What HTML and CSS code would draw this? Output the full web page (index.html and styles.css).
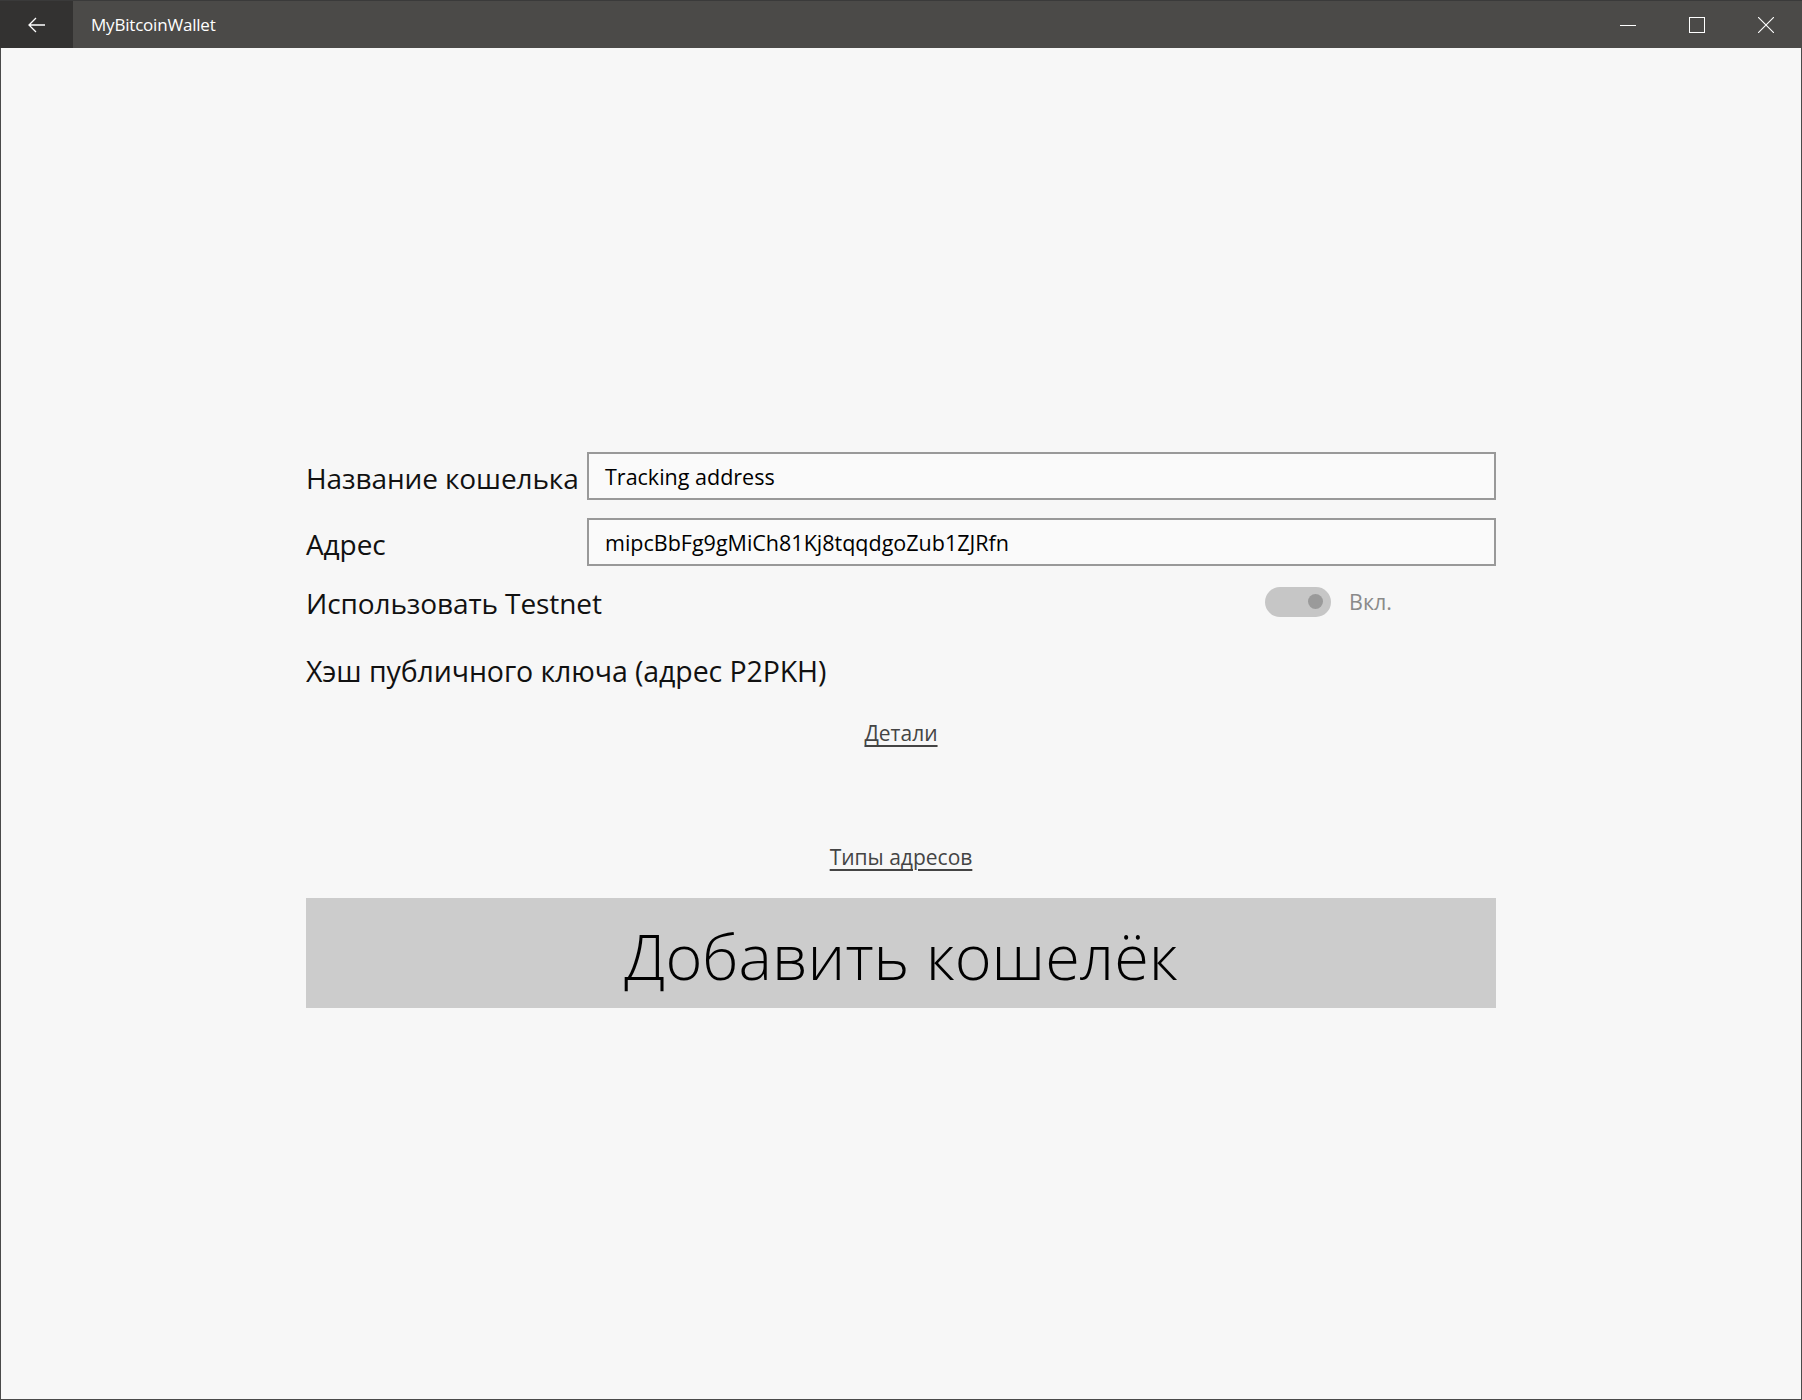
FILE: index.html
```html
<!DOCTYPE html>
<html lang="ru">
<head>
<meta charset="utf-8">
<title>MyBitcoinWallet</title>
<link rel="stylesheet" href="styles.css">
</head>
<body>
<div class="window">
  <header class="titlebar">
    <div class="back">
      <svg width="20" height="20" viewBox="0 0 20 20"><path d="M18 10H2M9 3L2 10L9 17" fill="none" stroke="#fff" stroke-width="1.3"/></svg>
    </div>
    <div class="title">MyBitcoinWallet</div>
    <div class="controls">
      <div class="ctl"><svg width="16" height="16" viewBox="0 0 16 16"><path d="M0 8.5H16" stroke="#fff" stroke-width="1"/></svg></div>
      <div class="ctl"><svg width="16" height="16" viewBox="0 0 16 16"><rect x="0.5" y="0.5" width="15" height="15" fill="none" stroke="#fff" stroke-width="1"/></svg></div>
      <div class="ctl"><svg width="16" height="16" viewBox="0 0 16 16"><path d="M0 0L16 16M16 0L0 16" stroke="#fff" stroke-width="1.1"/></svg></div>
    </div>
  </header>
  <main class="content">
    <div class="form">
      <div class="row field-row">
        <div class="label">Название кошелька</div>
        <div class="input">Tracking address</div>
      </div>
      <div class="row field-row second">
        <div class="label">Адрес</div>
        <div class="input">mipcBbFg9gMiCh81Kj8tqqdgoZub1ZJRfn</div>
      </div>
      <div class="row toggle-row">
        <div class="label">Использовать Testnet</div>
        <div class="toggle-wrap">
          <div class="toggle"><span class="knob"></span></div>
          <span class="toggle-text">Вкл.</span>
        </div>
      </div>
      <div class="hash">Хэш публичного ключа (адрес P2PKH)</div>
      <div class="link details"><a>Детали</a></div>
      <div class="link types"><a>Типы адресов</a></div>
      <div class="add-btn">Добавить кошелёк</div>
    </div>
  </main>
</div>
</body>
</html>
```

FILE: styles.css
```css
html, body {
  margin: 0;
  padding: 0;
  height: 100%;
}
body {
  font-family: "Open Sans", "Noto Sans", sans-serif;
  background: #f7f7f7;
}
.window {
  box-sizing: border-box;
  width: 1802px;
  height: 1400px;
  border: 1px solid #4a4a4a;
  border-top: none;
  display: flex;
  flex-direction: column;
  background: #f7f7f7;
}
.titlebar {
  height: 48px;
  background: #4b4a48;
  border-top: 1px solid #3a3a3a;
  box-sizing: border-box;
  display: flex;
  align-items: stretch;
  color: #fff;
  margin: 0 -1px;
  padding-right: 2px;
}
.back {
  width: 73px;
  background: #333231;
  display: flex;
  align-items: center;
  justify-content: center;
}
.title {
  display: flex;
  align-items: center;
  padding-left: 18px;
  font-size: 17px;
  flex: 1;
  letter-spacing: -0.2px;
}
.controls {
  display: flex;
}
.ctl {
  width: 69px;
  display: flex;
  align-items: center;
  justify-content: center;
}
.content {
  flex: 1;
  padding-top: 404px;
}
.form {
  width: 1190px;
  margin: 0 auto;
  display: flex;
  flex-direction: column;
}
.row {
  display: grid;
  grid-template-columns: 281px 1fr;
  align-items: center;
}
.field-row {
  height: 48px;
}
.field-row.second {
  margin-top: 18px;
}
.label {
  font-size: 28px;
  color: #111;
  padding-top: 3px;
  white-space: nowrap;
  letter-spacing: -0.1px;
}
.input {
  box-sizing: border-box;
  height: 48px;
  border: 2px solid #999;
  background: #fafafa;
  padding-left: 16px;
  font-size: 21.5px;
  color: #000;
  display: flex;
  align-items: center;
}
.toggle-row {
  margin-top: 15px;
  height: 30px;
}
.toggle-wrap {
  display: flex;
  align-items: center;
  padding-left: 678px;
}
.toggle {
  width: 66px;
  height: 30px;
  border-radius: 15px;
  background: #c6c6c6;
  position: relative;
}
.knob {
  position: absolute;
  width: 15px;
  height: 15px;
  border-radius: 50%;
  background: #9a9a9a;
  top: 7.5px;
  right: 8px;
}
.toggle-text {
  margin-left: 18px;
  font-size: 21.5px;
  color: #8a8a8a;
}
.hash {
  margin-top: 43px;
  height: 34px;
  line-height: 34px;
  font-size: 28.5px;
  color: #111;
  letter-spacing: -0.1px;
}
.link {
  text-align: center;
  font-size: 21px;
  color: #444;
}
.link a {
  text-decoration: underline;
  text-underline-offset: 4px;
  text-decoration-thickness: 1.5px;
}
.details {
  margin-top: 30px;
  height: 30px;
  line-height: 30px;
}
.types {
  margin-top: 94px;
  height: 30px;
  line-height: 30px;
}
.add-btn {
  margin-top: 26px;
  height: 110px;
  background: #cccccc;
  display: flex;
  align-items: center;
  justify-content: center;
  font-size: 63px;
  font-weight: 300;
  color: #000;
  letter-spacing: 0;
  padding-top: 4px;
  box-sizing: border-box;
}
```
